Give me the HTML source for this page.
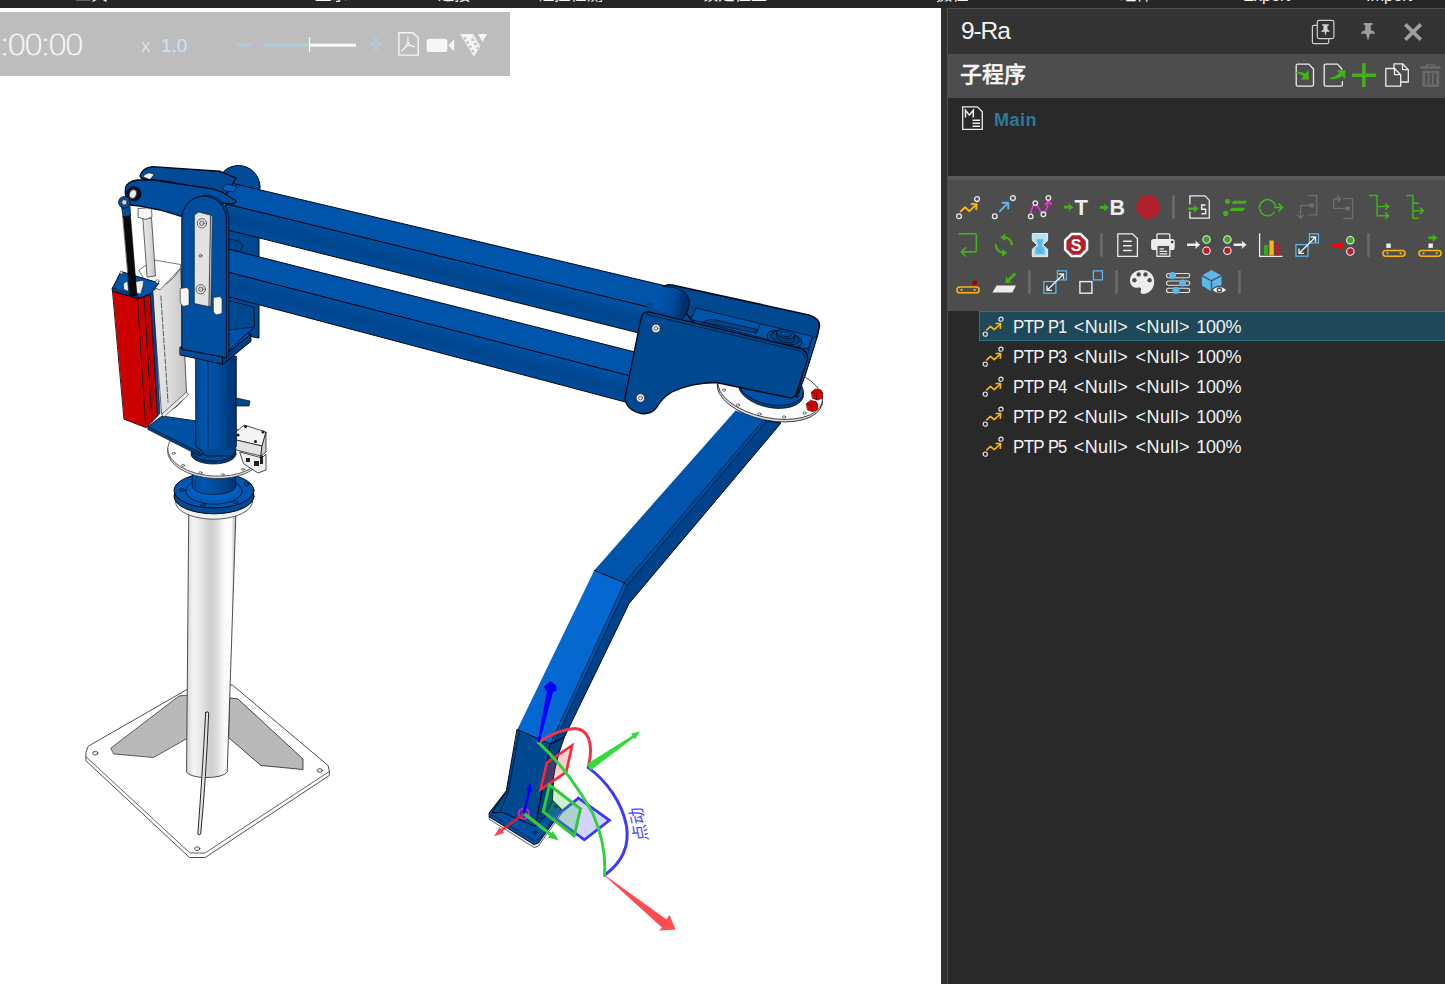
<!DOCTYPE html>
<html lang="zh">
<head>
<meta charset="utf-8">
<title>9-Ra</title>
<style>
*{box-sizing:border-box;margin:0;padding:0}
html,body{width:1445px;height:984px;overflow:hidden;background:#fff}
body{position:relative;font-family:"Liberation Sans","Noto Sans CJK SC",sans-serif;color:#f0f0f0}
#topbar{position:absolute;left:0;top:0;width:1445px;height:8px;background:#262626;overflow:hidden;z-index:5}
#topbar span{position:absolute;top:-18.3px;font-size:16.3px;line-height:24px;color:#f4f4f4;white-space:nowrap}
#view{position:absolute;left:0;top:8px;width:941px;height:976px;background:#fff;overflow:hidden}
#robot{position:absolute;left:0;top:-8px}
#sim{position:absolute;left:0;top:12px;width:510px;height:64px;background:#bdbdbd;z-index:3}
#sim .time{position:absolute;left:0px;top:14px;font-size:33.5px;line-height:38px;color:#f8f8f8;letter-spacing:-1.9px;white-space:nowrap;-webkit-text-stroke:0.8px #bdbdbd}
#sim .spd{position:absolute;left:141px;top:24px;font-size:19px;line-height:20px;color:#cfe2fa;white-space:pre}
#sim .spd b{font-weight:400;position:absolute;left:20px;top:0}
#sim svg{position:absolute;left:0;top:0}
#split{position:absolute;left:941px;top:8px;width:7px;height:976px;background:#2f2f2f}
#panel{position:absolute;left:947px;top:8px;width:498px;height:976px;background:#2a2a2a;border-left:1px solid #4e4e4e;border-top:1px solid #4e4e4e;overflow:hidden}
#ptitle{position:absolute;left:0;top:0;width:497px;height:45px;background:#333333}
#ptitle .t{position:absolute;left:13px;top:7px;font-size:24.5px;line-height:30px;color:#f2f2f2;letter-spacing:-1.1px}
#sub{position:absolute;left:0;top:45px;width:497px;height:44px;background:#4d4d4d}
#sub .t{position:absolute;left:12px;top:6px;font-size:22px;line-height:30px;font-weight:500;color:#f6f6f6;-webkit-text-stroke:0.4px #f6f6f6}
#progs{position:absolute;left:0;top:89px;width:497px;height:78px;background:#292929}
#progs .main{position:absolute;left:46px;top:10px;font-size:18px;line-height:24px;font-weight:700;color:#2c7a9c;letter-spacing:0.5px}
#tb{position:absolute;left:0;top:167px;width:497px;height:135px;background:#4d4d4d;border-top:4px solid #595959}
#list{position:absolute;left:0;top:302px;width:497px;height:674px;background:#292929}
.selbg{position:absolute;left:31px;top:0;width:466px;height:30px;background:#1f4859;border:1px solid #2e6f8c;border-right:none}
.row{position:absolute;left:0;width:497px;height:30px;font-size:18px;line-height:32px;color:#f3f3f3;white-space:pre}
.row span{position:absolute;top:0;transform-origin:0 50%}
.picon{position:absolute;left:0;top:0}
</style>
</head>
<body>
<div id="topbar">
<span style="left:75px">工具</span><span style="left:315px">显示</span><span style="left:438px">连接</span><span style="left:538px">碰撞检测</span><span style="left:702px">锁定位置</span><span style="left:936px">摄位</span><span style="left:1120px">组件</span><span style="left:1243px;top:-16.600px">Export</span><span style="left:1366px;top:-16.600px">Import</span>
</div>

<div id="view">
<svg id="robot" width="941" height="984" viewBox="0 0 941 984">
<defs>
<linearGradient id="gcol" x1="0" x2="1" y1="0" y2="0"><stop offset="0" stop-color="#d6d6d6"/><stop offset=".15" stop-color="#f4f4f4"/><stop offset=".3" stop-color="#e6e6e6"/><stop offset=".48" stop-color="#cecece"/><stop offset=".62" stop-color="#dcdcdc"/><stop offset=".76" stop-color="#fbfbfb"/><stop offset=".9" stop-color="#ffffff"/><stop offset=".95" stop-color="#d2d2d2"/><stop offset="1" stop-color="#b4b4b4"/></linearGradient>
<linearGradient id="gbcol" x1="0" x2="1" y1="0" y2="0"><stop offset="0" stop-color="#004a98"/><stop offset=".25" stop-color="#0056b0"/><stop offset=".5" stop-color="#004e9e"/><stop offset=".8" stop-color="#003e82"/><stop offset="1" stop-color="#003272"/></linearGradient>
<linearGradient id="gcyl" x1="0" x2="1" y1="0" y2="0"><stop offset="0" stop-color="#e8e8e8"/><stop offset=".5" stop-color="#dcdcdc"/><stop offset="1" stop-color="#c4c4c4"/></linearGradient>
<linearGradient id="gside1" gradientUnits="userSpaceOnUse" x1="446" y1="257.7" x2="439.500" y2="283.0"><stop offset="0" stop-color="#0052a6"/><stop offset=".25" stop-color="#004a96"/><stop offset=".6" stop-color="#00458e"/><stop offset=".9" stop-color="#004a98"/><stop offset="1" stop-color="#004c9c"/></linearGradient>
<linearGradient id="gside2" gradientUnits="userSpaceOnUse" x1="446" y1="328.5" x2="439.500" y2="352.6"><stop offset="0" stop-color="#0052a6"/><stop offset=".25" stop-color="#004a96"/><stop offset=".6" stop-color="#00458e"/><stop offset=".9" stop-color="#004a98"/><stop offset="1" stop-color="#004c9c"/></linearGradient>
<linearGradient id="groll" gradientUnits="userSpaceOnUse" x1="660" y1="296" x2="690" y2="303"><stop offset="0" stop-color="#0054aa"/><stop offset=".45" stop-color="#004c9c"/><stop offset=".85" stop-color="#002f66"/><stop offset="1" stop-color="#00285a"/></linearGradient>
</defs>
<g stroke="#000814" stroke-width="1" stroke-linejoin="round" stroke-linecap="round">
<g id="base">
<polygon points="86,752 88.3,746.2 200,682 232.6,685.2 328.1,765.5 329.3,771 329.3,775.5 205.2,857.5 189.5,857.5 86.2,761" fill="#ffffff" stroke="#222" stroke-width="0.8"/>
<polyline points="86.2,757 190,853 205,853 329.3,771.500" fill="none" stroke="#222" stroke-width="0.7"/>
<polygon points="111,748 179,696 188,695 188,738 153.5,757.5 114,754" fill="#b9b9b9" stroke="#222" stroke-width="0.7"/>
<polygon points="230,698 238,699 303,759 303,769.5 261,765.5 229,738" fill="#b9b9b9" stroke-width="0.7"/>
<g fill="#e8e8e8" stroke="#222" stroke-width="0.7"><ellipse cx="95.300" cy="753.200" rx="2.600" ry="1.900"/><ellipse cx="319.800" cy="770.500" rx="2.600" ry="1.900"/><ellipse cx="197.200" cy="848.700" rx="2.600" ry="1.900"/></g>
</g>

<g id="column">
<path d="M189.200,505 L236.200,505 L227.200,772 A20.400,6.500 0 0 1 186.400,770 Z" fill="url(#gcol)" stroke="#222" stroke-width="0.8"/>
<path d="M205.700,712.500 Q207.200,711 208.700,712.500 Q206,780 200.700,834 Q199.200,835.500 197.800,834 Q202,780 205.700,712.500Z" fill="#e4e4e4" stroke="#111" stroke-width="0.9"/>
<!-- blue flange -->
<ellipse cx="214" cy="501.7" rx="38.5" ry="17.5" fill="#f2f2f2" stroke="#222" stroke-width="0.7"/>
<ellipse cx="214" cy="496.3" rx="40" ry="17.5" fill="#004a96"/>
<ellipse cx="214" cy="490.5" rx="40" ry="17.5" fill="#0056b0"/>
<ellipse cx="214" cy="491" rx="28.2" ry="13.2" fill="#0058b4" stroke-width="0.7"/>
<ellipse cx="214" cy="489.5" rx="24" ry="10.5" fill="#0060c4" stroke="none"/>
<path d="M192.2,468 L192.200,486 A21.800,8.500 0 0 0 235.800,486 L235.800,468 Z" fill="url(#gbcol)" stroke-width="0.7"/>
<g fill="#0050a4" stroke-width="0.6"><ellipse cx="182" cy="490" rx="2.300" ry="1.500"/><ellipse cx="246.500" cy="484" rx="2.300" ry="1.500"/><ellipse cx="203" cy="505.500" rx="2.300" ry="1.500"/><ellipse cx="235.500" cy="502.500" rx="2.300" ry="1.500"/></g>
<!-- white disc -->
<ellipse cx="214.800" cy="452.900" rx="47.200" ry="25.600" transform="rotate(3.200 214.800 452)" fill="#e0e0e0" stroke="#222" stroke-width="0.7"/>
<ellipse cx="214.800" cy="450.700" rx="47.200" ry="25.400" transform="rotate(3.200 214.800 452)" fill="#ffffff" stroke="#222" stroke-width="0.7"/>
<g fill="#e8e8e8" stroke="#333" stroke-width="0.6"><ellipse cx="173.700" cy="453.300" rx="1.600" ry="1.100"/><ellipse cx="183" cy="465.400" rx="1.600" ry="1.100"/><ellipse cx="200.400" cy="472.700" rx="1.600" ry="1.100"/><ellipse cx="222.700" cy="474.600" rx="1.600" ry="1.100"/><ellipse cx="243" cy="469.300" rx="1.600" ry="1.100"/></g>
<ellipse cx="213.500" cy="454" rx="22.500" ry="10" fill="#003a7a" stroke-width="0.7"/>
<ellipse cx="213.800" cy="452" rx="22" ry="9" fill="#004a96" stroke-width="0.7"/>
<!-- lower bracket arm -->
<polygon points="148,426.500 162,416 197,421 197,447 206,453 200,455" fill="#0050a4" stroke-width="0.8"/>
<polygon points="148,426.500 200,452.500 200,456 148,429.500" fill="#003f82" stroke-width="0.6"/>
<!-- motor box -->
<polygon points="236,432 244,425 266,432 262,446 236,440" fill="#f4f4f4" stroke-width="0.7"/>
<polygon points="236,440 262,446 261,456 236,450" fill="#e2e2e2" stroke-width="0.7"/>
<polygon points="262,446 266,432 266,452 261,456" fill="#d0d0d0" stroke-width="0.7"/>
<polygon points="240,452 262,458 266,454 266,470 258,473 244,464" fill="#f0f0f0" stroke-width="0.7"/>
<g fill="#222" stroke="none"><circle cx="245.500" cy="426.500" r="1.6"/><circle cx="263" cy="432" r="1.6"/><circle cx="238" cy="435" r="1.6"/><circle cx="255.500" cy="441.500" r="1.6"/><rect x="246" y="458" width="4" height="4"/><rect x="254" y="461" width="5" height="5"/><rect x="260" y="456" width="3" height="8"/></g>
<!-- blue column -->
<path d="M195.800,356 L236.300,356 L236.300,446 A20.250,6 0 0 1 195.800,446 Z" fill="url(#gbcol)" stroke-width="0.8"/>
<line x1="208" y1="362" x2="208" y2="450" stroke-width="0.5"/>
<path d="M200,450 L206,456 L232,456 L236.300,449" fill="#004890" stroke-width="0.7"/>
<polygon points="236.300,335 250,333 250,340 245,344 236.300,344" fill="#004890" stroke-width="0.7"/>
<polygon points="236.300,398 250,401 249,406 236.300,406" fill="#004890" stroke-width="0.7"/>
</g>

<g id="lowerarm">
<!-- side faces -->
<polygon points="764,420.1 781,423 629.2,603.3 564.3,737.3 550.5,744 624.6,582.9" fill="#00418a"/>
<!-- upper segment -->
<polygon points="735.6,410.4 764,420.1 624.6,582.9 594.2,570.4" fill="#0054ac" stroke="none"/>
<polygon points="764,420.1 766.5,421 627,585.6 624.6,582.9" fill="#004a98" stroke-width="0.5"/>
<!-- lower segment -->
<polygon points="594.2,570.4 624.6,582.9 550.5,744 517.3,729.5" fill="#0468d0" stroke="none"/>

<polygon points="624.6,582.9 627,585.6 553,745 550.5,744" fill="#0052a8" stroke-width="0.5"/>
<path d="M594.2,570.4 L624.6,582.9" fill="none"/>
<!-- foot plate -->
<path d="M489.5,819.5 L534,847.5 L538.5,846 L561.5,813.5 L561.5,810 L489.5,816 Z" fill="#e8e8e8" stroke-width="0.6"/>
<path d="M489.4,812.6 L507,790 L552.4,800 L561.1,808.8 L561.5,811 L538.5,843 L534,844.5 L489.5,817 Z" fill="#0050a2"/>
<polyline points="489.4,813.6 534.5,840.5 538.5,839.5 561.1,809.5" fill="none" stroke-width="0.6"/>
<g fill="#003a78" stroke-width="0.5"><ellipse cx="496" cy="812" rx="1.8" ry="1.4"/><ellipse cx="535.5" cy="832.5" rx="1.8" ry="1.4"/><ellipse cx="556" cy="806.5" rx="1.8" ry="1.4"/></g>
<!-- foot block -->
<path d="M517.3,729.5 L550.5,744 L541.7,793 L535.5,826.5 L503,812.6 L492,812.5 L505.9,792.3 Z" fill="#004890"/>
<path d="M550.5,744 L564.3,737.3 Q556,760 553.6,777 L552.4,801 L544,817.5 L535.5,826.5 L541.7,793 Z" fill="#003f80"/>
<polyline points="519.5,731.5 507.8,793.5 500,811.5" fill="none" stroke-width="0.6"/>
</g>

<g id="beams">
<!-- back plate of left clevis -->
<path d="M226,190 L226,332 L259,338 L259,200 Z" fill="#004890"/>
<circle cx="238.5" cy="187" r="21.5" fill="#004c9a"/>
<path d="M229,240 q10,-2 14,6 q-3,9 -14,6z" fill="#004488" stroke-width="0.6"/>
<!-- lower beam -->
<polygon points="226,248.5 640,353.3 634,377.0 226,271.7" fill="#0054aa"/>
<polygon points="226,271.7 634,377.0 628,402.7 226,296.0" fill="url(#gside2)"/>
<!-- upper beam -->
<polygon points="226,181.8 666,286.0 692,293 684,318 656,309.0 226,204.0" fill="#0054aa"/>
<polygon points="226,204.0 656,309.0 642,333.8 226,229.6" fill="url(#gside1)"/>
</g>

<g id="leftasm">
<!-- white pneumatic cylinder -->
<path d="M152.600,290 Q170,286 180.600,268 L186.500,392 Q182,408 162,414 Z" fill="url(#gcyl)" stroke="#222" stroke-width="0.7"/>
<path d="M160.900,296 L168,402" fill="none" stroke="#222" stroke-width="0.7" stroke-dasharray="5 2"/>
<polygon points="139,270 154,260 180.600,264.500 180.600,268 160,290 148,285" fill="#fdfdfd" stroke="#222" stroke-width="0.6"/>
<path d="M162,414 L186.500,392 l2,3 L164,417z" fill="#eee" stroke="#222" stroke-width="0.6"/>
<!-- white rod and nut -->
<polygon points="143.200,218 151.500,218 155.500,276 147.500,277" fill="url(#gcyl)" stroke="#222" stroke-width="0.7"/>
<polygon points="138.500,208.500 151.500,207.500 152,217 146,219.500 138.500,217.500" fill="#f6f6f6" stroke="#222" stroke-width="0.7"/>
<!-- red box -->
<polygon points="150.2,294.4 153,292.5 160,413.500 157.5,416" fill="#004a96" stroke-width="0.6"/>
<polygon points="112.8,291 137.7,298.6 146,427.6 124.3,419.3" fill="#cc0000" stroke="#200" stroke-width="0.9"/>
<polygon points="137.7,298.6 144.3,296.5 152.3,421.3 146,427.6" fill="#c60000" stroke="#200" stroke-width="0.9"/>
<polygon points="144.3,296.5 150.2,294.4 157.5,416 152.3,421.3" fill="#bc0000" stroke="#200" stroke-width="0.9"/>
<!-- blue cap -->
<polygon points="112.5,288 121,271.5 159,283 151,293.500 138.500,298.600 112.800,291" fill="#0054aa"/>
<polygon points="112.500,288 138.500,296 138.500,298.600 112.800,291" fill="#004488" stroke-width="0.5"/>
<polygon points="123.500,283.500 127.500,281 128.500,291 124,289.500" fill="#f0f0f0" stroke="#222" stroke-width="0.5"/>
<polygon points="135.500,281.500 143.500,280.500 143,286 140.500,294 136.500,293" fill="#f0f0f0" stroke="#222" stroke-width="0.5"/>
<circle cx="157.300" cy="281.500" r="1.800" fill="#f0f0f0" stroke="#222" stroke-width="0.5"/><circle cx="121.500" cy="272.500" r="1.500" fill="#f0f0f0" stroke="#222" stroke-width="0.5"/>
<!-- black rod -->
<polygon points="123,216 130.500,215.500 137,296 130,296" fill="#0a0a0a" stroke="#000" stroke-width="0.5"/>
<!-- back link -->
<path d="M140,176 Q142,168 152,166.600 L220,171.300 L236,178 L226,195 L170,182 L141.500,178.500 Z" fill="#004a96" stroke-width="1.400"/>
<path d="M143,176.500 q5,-6 11,-2 l-4,5z" fill="#f4f4f4" stroke="#222" stroke-width="0.6"/>
<!-- beam end cap -->
<path d="M222.500,187 Q224,184 229,184.500 L237,186.500 L234,192 L224,190.500Z" fill="#0060c0" stroke-width="0.6"/>
<!-- front link -->
<path d="M125.500,188 Q127,181.500 137.500,180 L152.500,180 L212.500,188.800 L222,192 L236.300,201 Q235,204 231,204 L222,203 L181.300,216.300 L160,210 L141.300,206.300 L130.600,205 Q124,198 125.500,188 Z" fill="#004e9e" stroke-width="1.300"/>
<circle cx="133.800" cy="193.800" r="7.300" fill="#0a1020" stroke-width="0.6"/>
<ellipse cx="133" cy="194" rx="3.500" ry="4.500" fill="#e8e8e8" stroke="#222" stroke-width="0.6" transform="rotate(20 133 194)"/>
<!-- rod eye -->
<path d="M121.500,207 L123,216.500 L130.500,216 L130,206Z" fill="#004e9e" stroke-width="0.7"/>
<circle cx="124.400" cy="202.300" r="5.800" fill="#004e9e" stroke-width="0.8"/>
<circle cx="124.400" cy="202.300" r="2.600" fill="#d8d8d8" stroke="#222" stroke-width="0.6"/>
<!-- platform -->
<polygon points="180.300,347.600 222.900,357 250.900,334.200 226,326" fill="#0056b0"/>
<polygon points="180.300,347.600 222.900,357 222.900,364.300 180.300,355" fill="#004c9c"/>
<polygon points="222.900,357 250.900,334.200 250.900,341.400 222.900,364.300" fill="#003f82"/>
<!-- inner right of bracket -->
<polygon points="226.500,300 254,307 254.500,327 229,350 226.500,350" fill="#004890" stroke-width="0.7"/>
<polygon points="229,330 254.500,327 229,350" fill="#0052a8" stroke-width="0.6"/>
<!-- front bracket plate -->
<path d="M181.800,349 L181.800,219 A22.300,23 0 0 1 226.400,219 L226.400,358.500 L222.900,357 Z" fill="#004e9e"/>
<path d="M204.100,196 A22.300,23 0 0 1 226.400,219 L226.400,358 L229,355.500 L229,219 A24,24.200 0 0 0 204.100,194.900 Z" fill="#003f82" stroke-width="0.6"/>
<!-- small white brackets -->
<g fill="#f4f4f4" stroke="#222" stroke-width="0.6"><polygon points="180.500,288.500 187,287.500 189,290 189,305 183,306.500 180.500,303"/><polygon points="213.500,297.500 220,296.500 222,299 222,313.500 216,315 213.500,312"/></g>
<!-- white strip -->
<polygon points="194.500,215 198.500,212 210.800,215.200 209.200,306.700 194.500,303.600" fill="#e2e2e2" stroke="#222" stroke-width="0.7"/>
<polygon points="210.800,215.200 212.300,216.500 210.800,305.500 209.200,306.700" fill="#c8c8c8" stroke="#222" stroke-width="0.5"/>
<g fill="#eee" stroke="#222" stroke-width="0.7"><circle cx="201.900" cy="223.300" r="4.600"/><circle cx="200.700" cy="289.300" r="4.600"/></g>
<g fill="#ccc" stroke="#222" stroke-width="0.6"><circle cx="201.900" cy="223.300" r="2.300"/><circle cx="200.700" cy="289.300" r="2.300"/><circle cx="200.600" cy="255.800" r="1.400"/></g>
</g>

<g id="endbracket">
<!-- flange disc under bracket -->
<ellipse cx="769.9" cy="393.6" rx="53.4" ry="26.8" transform="rotate(11.8 769.9 393)" fill="#dedede" stroke-width="0.7"/>
<ellipse cx="769.9" cy="391.4" rx="53.2" ry="26.4" transform="rotate(11.8 769.9 393)" fill="#fcfcfc" stroke-width="0.7"/>
<g fill="#fff" stroke-width="0.6" stroke="#222"><ellipse cx="724" cy="390" rx="1.6" ry="1.2"/><ellipse cx="738" cy="405" rx="1.6" ry="1.2"/><ellipse cx="759.5" cy="414" rx="1.6" ry="1.2"/><ellipse cx="784" cy="417" rx="1.6" ry="1.2"/><ellipse cx="804.5" cy="413" rx="1.6" ry="1.2"/></g>
<ellipse cx="771" cy="390" rx="33" ry="17.5" transform="rotate(11.8 771 390)" fill="#003f82" stroke-width="0.7"/>
<ellipse cx="771" cy="387" rx="33" ry="17.5" transform="rotate(11.8 771 387)" fill="#0052a8" stroke-width="0.7"/>
<!-- red nuts -->
<g fill="#e00000" stroke="#400" stroke-width="0.7"><path d="M811.5,392 l4,-3 l5.500,1 l1.800,3 l-0.500,5 l-4.500,2 l-5,-1.500z"/><path d="M806.5,403.500 l4,-3 l5.500,1 l1.800,3 l-0.500,5 l-4.500,2 l-5,-1.500z"/><path d="M812,392.500 l4.500,1.500 l5,-1.500 M816.500,394 v5.500 M807,404 l4.500,1.500 l5,-1.500 M811.500,405.500 v5.500" fill="none"/></g>
<polygon points="648,302 694,313 692,332 640,334" fill="#004890" stroke="none"/>
<!-- back plate + inner -->
<path d="M664,286.500 Q667,284 672,285 L808.800,315 Q820,318.500 819.400,326 L817.500,335 L805,375 L797,397 L790,380 L700,330 Z" fill="#004890" stroke-width="1.600"/>
<path d="M696.300,308.100 L812.500,336.300 L808,349 L797,347 L691.300,319.500 Z" fill="#0054aa" stroke-width="0.7"/>
<path d="M760,324.400 L756.300,333.800" fill="none" stroke-width="0.7"/>
<path d="M703.500,322 Q708,318.500 716,320 L757,329.500 L756,332.500 Z" fill="#004488" stroke-width="0.7"/>
<path d="M664.500,286.700 Q686,287 689.500,300 Q690,312 682,319 L652,309 Z" fill="url(#groll)" stroke="none"/><path d="M664.500,286.700 Q686,287 689.500,300 Q690,312 682,319" fill="none" stroke-width="0.8"/>
<!-- pin -->
<ellipse cx="784.500" cy="339" rx="18" ry="8" transform="rotate(13 784.500 339)" fill="#004a96" stroke-width="0.7"/>
<ellipse cx="785" cy="338" rx="14.500" ry="6.300" transform="rotate(13 785 338)" fill="#004488" stroke-width="0.7"/>
<path d="M776.800,332 v4.500 a9,4.200 13 0 0 17.600,4 v-4.500" fill="#003a7a" stroke-width="0.7"/>
<ellipse cx="785.600" cy="334" rx="9" ry="4.200" transform="rotate(13 785.600 334)" fill="#0052a8" stroke-width="0.7"/>
<ellipse cx="785.600" cy="334" rx="6" ry="2.600" transform="rotate(13 785.600 334)" fill="#004a98" stroke-width="0.6"/>
<!-- right inner face -->
<path d="M807,358 L811.500,340 L817.500,335 L805,375 L797,397 Z" fill="#0052a8" stroke-width="0.7"/>
<!-- front plate -->
<path d="M648.800,311.900 L799.300,348.200 Q808.500,351 807.600,359 L796.500,393 Q794.500,399.500 788,397.500 L716.300,382.500 Q690,383 672,392 Q662,398 657,407 Q651,415 641,413.500 Q626,410 625,398 L640.500,320.500 Q642.500,311 648.800,311.900 Z" fill="#004890" stroke-width="1.300"/>
<path d="M647,314.500 L798.500,350.700 Q805,352.500 805.500,358" fill="none" stroke-width="0.6"/>
<g fill="#f4f4f4" stroke="#222" stroke-width="0.7"><circle cx="656" cy="328.500" r="4.300"/><circle cx="640.500" cy="398" r="4.300"/></g>
<g fill="#ddd" stroke="#222" stroke-width="0.6"><circle cx="656" cy="328.500" r="2"/><circle cx="640.500" cy="398" r="2"/></g>
</g>

<g id="gizmo" stroke="none" fill="none">
<!-- planes -->
<polygon points="546.9,762.5 572.1,745.5 566.2,772.2 540.6,789.6" fill="rgba(255,60,60,0.25)" stroke="#ee2c3c" stroke-width="2.6" stroke-linejoin="miter"/>
<polygon points="578.5,798.1 609.5,820.4 584.3,839.8 554.3,817.5" fill="rgba(60,60,255,0.22)" stroke="#3a3af4" stroke-width="2.8" stroke-linejoin="miter"/>
<polygon points="549.5,785 580.5,808.8 574.2,835.9 543.2,811.7" fill="rgba(60,200,60,0.25)" stroke="#2fc83a" stroke-width="3" stroke-linejoin="miter"/>
<!-- arcs -->
<path d="M538.3,742.3 C548,736 560,729.500 574.6,728.500 C588,729 594,742 588.4,767" stroke="#f03446" stroke-width="3"/>
<path d="M588.2,767.6 C607,781 622,803 626.500,826 C630,848 620,864 604.5,875.2" stroke="#3c3cf6" stroke-width="3"/>
<path d="M538.3,742.3 C560,762 580,790 592.7,813.3 C601,832 606,854 604.5,875.2" stroke="#35d040" stroke-width="3"/>
<!-- big arrows -->
<polygon points="537.4,742 539.6,742.5 553,692 556.5,691 556.3,685.5 550.7,681 544,686.5 545.5,690.5 547,691" fill="#0000ff"/>
<polygon points="587,764 590.5,770.5 634,737.5 635,739.500 640,731.500 631,733.500 632.500,735.500" fill="#32dc3c"/>
<polygon points="604,874.5 605,876 662,927.500 659,930.500 675.5,929.500 669.500,915 666.500,919.500" fill="#ff4a50"/>
<!-- small gizmo -->
<circle cx="523.8" cy="813.6" r="5.2" stroke="#d020d8" stroke-width="2"/>
<polygon points="522.700,813 525,813.500 530.500,791 532.500,791.500 530.5,783.3 526,789.800 528,790.400" fill="#0000ff"/>
<polygon points="523,812.500 524.800,815 503,831 504.200,833 494,836.200 499.800,827 501,829" fill="rgba(240,30,40,0.8)"/>
<polygon points="523.500,815.200 525.500,812.500 551.500,833 552.800,831 558.800,840.400 548,837.500 549.500,835.500" fill="#2fd03a"/>
<text transform="translate(648,840.500) rotate(-101) skewX(-6)" font-family="'Liberation Sans','Noto Sans CJK SC',sans-serif" font-size="17.200" font-weight="400" fill="#4a4aff" stroke="none">点动</text>
</g>

</g>
</svg>

</div>

<div id="sim">
<div class="time">:00:00</div>
<div class="spd">x<b>1.0</b></div>
<svg width="510" height="64" viewBox="0 12 510 64">
<rect x="236.500" y="43.300" width="15" height="3.800" rx="1.500" fill="#b2cad6"/>
<rect x="262.600" y="43.700" width="47" height="3" fill="#b2cad6"/><rect x="309.300" y="43.700" width="46.700" height="3" fill="#fafafa"/><rect x="308.900" y="37" width="1.200" height="15.200" fill="#fafafa"/>
<path d="M369,44.200 L383,44.200 M376,37.200 L376,51.200" stroke="#b2cad6" stroke-width="3.400" fill="none"/>
<g fill="none" stroke="#f6f6f6" stroke-width="1.400"><path d="M398.900,32.800 L412.600,32.800 L418.200,37.600 L418.200,55.100 L398.900,55.100Z"/>
<path d="M407.900,37 L407.900,42.500 M406.600,46 L401.800,50.800 M409.800,45.500 L414.600,46.600 M407.900,42 L405.800,46.500 L410.300,45.300Z" stroke-width="1.100" stroke-linecap="round"/></g>
<rect x="426.600" y="38.700" width="20.700" height="13.300" rx="2.600" fill="#f6f6f6"/><polygon points="448.400,45.300 454.200,39.300 454.200,51.800" fill="#f6f6f6"/>
<g><polygon points="460,34 473.200,34 480.300,46.500 473.800,56.800" fill="#f4f4f4"/>
<g fill="#bcbcbc"><rect x="463.800" y="37.200" width="2.300" height="2.300"/><rect x="466.600" y="41.400" width="2.300" height="2.300"/><rect x="469.200" y="45.600" width="2.300" height="2.300"/><rect x="471.600" y="49.800" width="2.300" height="2.300"/>
<rect x="471.400" y="38.700" width="2.300" height="2.300"/><rect x="474.100" y="42.900" width="2.300" height="2.300"/><rect x="476.400" y="47.100" width="2.100" height="2.100"/></g>
<path d="M461.600,35 L474,55.600 M472.200,35 L479,46.800" stroke="#d4d4d4" stroke-width="0.600" fill="none"/>
<polygon points="477.900,34 487,34 482.500,42" fill="#f6f6f6"/></g>
</svg>

</div>

<div id="split"></div>
<div id="panel">
 <div id="ptitle"><div class="t">9-Ra</div><svg style="position:absolute;left:0;top:0" width="497" height="45" viewBox="948 9 497 45">
<g fill="none" stroke="#cfcfcf" stroke-width="1.200"><path d="M1317.300,25.300 L1314,25.300 Q1312.400,25.300 1312.400,27 L1312.400,42 Q1312.400,43.700 1314,43.700 L1327,43.700 Q1328.700,43.700 1328.700,42 L1328.700,38.600"/>
<rect x="1317.300" y="20.400" width="16.600" height="18.200" rx="1.800"/></g>
<path d="M1322.200,24.200 h6.600 v1.600 h-1.300 v3.600 q2.200,0.600 2.400,2.400 h-3.500 l-0.900,4.500 l-0.900,-4.500 h-3.500 q0.200,-1.800 2.400,-2.400 v-3.600 h-1.300z" fill="#d4d4d4"/>
<path d="M1363.800,23.100 h8.700 v2 h-1.700 v5.200 q3.800,0.800 4.100,3.400 h-4.900 l-2,7.400 l-2,-7.400 h-4.900 q0.300,-2.600 4.100,-3.400 v-5.200 h-1.700z" fill="#9e9e9e"/>
<path d="M1405.300,24.400 L1420.800,39.800 M1420.800,24.400 L1405.300,39.800" stroke="#9e9e9e" stroke-width="3.700" fill="none"/>
</svg>
</div>
 <div id="sub"><div class="t">子程序</div><svg style="position:absolute;left:0;top:0" width="497" height="44" viewBox="948 54 497 44">
<g fill="none" stroke="#ededed" stroke-width="1.300" stroke-linejoin="round">
<path d="M1296.200,65.500 Q1296.200,64.100 1297.600,64.100 L1308.800,64.100 L1313.500,69 L1313.500,84.700 Q1313.500,86.100 1312.100,86.100 L1297.600,86.100 Q1296.200,86.100 1296.200,84.700Z"/>
<path d="M1342.300,69.500 L1337.600,64.100 L1325.600,64.100 Q1324.200,64.100 1324.200,65.500 L1324.200,84.700 Q1324.200,86.100 1325.600,86.100 L1341,86.100 Q1342.400,86.100 1342.400,84.700 L1342.400,81"/>
</g>
<path d="M1293.500,72.800 Q1300,70.500 1305,73.500 L1308.500,70.500 L1309,79.700 L1300.500,79.400 L1303.500,76.300 Q1299,73 1293.500,72.800Z" fill="#42b11a"/>
<path d="M1328.400,78.200 Q1335,77.500 1339.500,72.800 L1336.500,70.300 L1345.300,70.300 L1345.300,79.300 L1342.300,76 Q1336,81 1328.400,78.200Z" fill="#42b11a"/>
<path d="M1352,75.200 L1376,75.200 M1363.900,63.200 L1363.900,87.100" stroke="#42b11a" stroke-width="3.400" fill="none"/>
<g fill="#4d4d4d" stroke="#ededed" stroke-width="1.300" stroke-linejoin="round">
<path d="M1394,63.800 L1402.500,63.800 L1408.300,69.600 L1408.300,82 L1394,82Z"/><path d="M1402.500,63.800 L1402.500,69.600 L1408.300,69.600" fill="none"/>
<path d="M1385.800,68.500 L1394.500,68.500 L1400.700,74.700 L1400.700,86.200 L1385.800,86.200Z"/><path d="M1394.500,68.500 L1394.500,74.700 L1400.700,74.700" fill="none"/>
</g>
<g fill="#686868"><rect x="1420.300" y="66" width="20.600" height="2.800" rx="1"/><path d="M1425.600,66 q0,-2.200 2.200,-2.200 h5.500 q2.200,0 2.200,2.200 h-1.500 q0,-0.900 -0.900,-0.900 h-5.100 q-0.900,0 -0.900,0.900z"/>
<path d="M1422.300,70.700 h16.900 v15 q0,1.400 -1.400,1.400 h-14.100 q-1.400,0 -1.400,-1.400z M1425.300,73 v11.500 h2.300 v-11.500z M1429.600,73 v11.500 h2.300 v-11.500z M1433.900,73 v11.500 h2.300 v-11.500z" fill-rule="evenodd"/></g>
</svg>
</div>
 <div id="progs"><svg style="position:absolute;left:0;top:0" width="60" height="40" viewBox="948 98 60 40">
<g fill="none" stroke="#ededed" stroke-width="1.300"><path d="M962.700,106.800 L977.400,106.800 L982.300,111.700 L982.300,129.400 L962.700,129.400Z"/>
<path d="M965.500,117.600 L965.500,110.300 L969.400,115 L973.300,110.300 L973.300,117.600" stroke-width="1.500"/>
<path d="M972.500,120.200 L980.100,120.200 M972.500,123.200 L980.100,123.200 M972.500,126.200 L980.100,126.200" stroke-width="1.400"/></g>
</svg>
<div class="main">Main</div></div>
 <div id="tb"><svg style="position:absolute;left:0;top:0" width="497" height="131" viewBox="948 180 497 131">
<g transform="translate(956,195) scale(1.0)" fill="none" stroke-linecap="round" stroke-linejoin="round">
<circle cx="3" cy="21.2" r="2.4" stroke="#ededed" stroke-width="1.3"/><circle cx="21" cy="4.1" r="2.4" stroke="#ededed" stroke-width="1.3"/>
<path d="M4.8,16.4 L9,12.3 L13.3,16.1 L20,9.9 M15.6,9 L20.6,9.2 L20.3,14.4" stroke="#fdb515" stroke-width="1.9"/></g>
<g transform="translate(992,195)" fill="none" stroke-linecap="round" stroke-linejoin="round">
<circle cx="2.8" cy="21.2" r="2.4" stroke="#ededed" stroke-width="1.3"/><circle cx="20.9" cy="3.1" r="2.4" stroke="#ededed" stroke-width="1.3"/>
<path d="M7.8,16.4 L15.9,8.2 M10.6,7.8 L16.3,7.8 L16.3,13.6" stroke="#5bb8ec" stroke-width="1.9"/></g>
<g transform="translate(1028,195)" fill="none" stroke-linecap="round" stroke-linejoin="round">
<path d="M2.9,18.4 C3.8,13 5,10.5 6.300,9.800 M8.800,10 C11,13 12.500,16.500 14.200,17.700 M17,17.600 C19,14 20,10 20.300,6.300 M17.300,9.600 L20.400,5.800 L23.200,9.300" stroke="#ff2ce6" stroke-width="1.6"/>
<g stroke="#ededed" stroke-width="1.3"><circle cx="2.7" cy="21.4" r="2.3"/><circle cx="7.3" cy="8.100" r="2.3"/><circle cx="15.4" cy="19.300" r="2.3"/><circle cx="20.4" cy="2.900" r="2.300"/></g></g>
<g transform="translate(1064,195)"><path d="M0,10.85 L5.1000000000000005,10.85 L4.300000000000001,7.999999999999999 L9.3,12.2 L4.300000000000001,16.4 L5.1000000000000005,13.549999999999999 L0,13.549999999999999Z" fill="#42b11a" stroke="none"/><text x="10.500" y="19.900" font-family="'Liberation Sans',sans-serif" font-weight="700" font-size="22" fill="#ededed">T</text></g>
<g transform="translate(1100,195)"><path d="M-0.2,11.05 L4.6000000000000005,11.05 L3.8000000000000007,8.2 L8.8,12.4 L3.8000000000000007,16.6 L4.6000000000000005,13.75 L-0.2,13.75Z" fill="#42b11a" stroke="none"/><text x="9.600" y="19.900" font-family="'Liberation Sans',sans-serif" font-weight="700" font-size="21.5" fill="#ededed">B</text></g>
<circle cx="1148.1" cy="207.100" r="11.8" fill="#b0212b"/>
<rect x="1172.2" y="195.3" width="2.6" height="23.5" fill="#6c6c6c"/>
<g transform="translate(1187,195)" fill="none" stroke="#ededed" stroke-width="1.3">
<path d="M2.900,9.500 L2.900,0.900 L18,0.900 L22.300,5.400 L22.300,23.200 L2.900,23.200 L2.900,16.500"/>
<path d="M18.600,9.900 L14.700,9.900 L14.700,14.300 L18.600,14.300 L18.600,18.700 L14.400,18.700" stroke-width="1.5"/>
<path d="M1.2,12.399999999999999 L7.3999999999999995,12.399999999999999 L6.6,9.5 L11.6,13.7 L6.6,17.9 L7.3999999999999995,15.0 L1.2,15.0Z" fill="#42b11a" stroke="none"/></g>
<g transform="translate(1223,195)" fill="#42b11a"><circle cx="4.400" cy="6.600" r="2.500"/><circle cx="2.700" cy="18.400" r="2.600"/>
<polygon points="10.600,5.700 24.200,5.700 22,8.800 8.400,8.800"/><polygon points="8.600,12.800 22.200,12.800 20.200,15.900 6.400,15.900"/></g>
<g transform="translate(1259,195)" fill="none" stroke="#42b11a" stroke-width="1.600" stroke-linecap="round" stroke-linejoin="round">
<path d="M16.300,10.200 A8.100,8.100 0 1 0 15.200,17.400"/><path d="M15.500,12.400 L23.300,12.400 M19.900,8.900 L23.600,12.400 L19.900,15.900"/></g>
<g transform="translate(1295,195)" fill="none" stroke="#6e6e6e" stroke-width="1.300">
<path d="M12.700,0.600 L21.600,0.600 L21.600,19.900 L12.700,19.900"/><rect x="14.400" y="8.300" width="4.400" height="4.200" fill="#6e6e6e" stroke="none"/>
<path d="M14.400,10.300 L5.500,10.300 L5.500,23 M2.400,20 L5.500,23.300 L8.600,20"/></g>
<g transform="translate(1331,195)" fill="none" stroke="#6e6e6e" stroke-width="1.300">
<path d="M12.100,3.600 L21.600,3.600 L21.600,23.500 L12.100,23.500"/><rect x="14.400" y="11.400" width="4.400" height="4.200" fill="#6e6e6e" stroke="none"/>
<path d="M14.400,13.400 L2.600,13.400 L2.600,4 L9.200,4 M6.100,0.700 L9.600,4 L6.100,7.300"/></g>
<g transform="translate(1367,195)" fill="none" stroke="#42b11a" stroke-width="1.500" stroke-linejoin="miter">
<path d="M2.200,0.600 L10.100,0.600 L10.100,20.700 L21.300,20.700 M10.100,11.600 L21.300,11.600 M18.200,8.500 L21.600,11.600 L18.200,14.700 M18.200,17.600 L21.600,20.700 L18.200,23.800"/></g>
<g transform="translate(1403,195)" fill="none" stroke="#42b11a" stroke-width="1.500">
<path d="M3.300,0.600 L9.900,0.600 L9.900,23.200 L16,23.200 M9.900,8.300 L16,8.300 M9.900,15.800 L20.200,15.800 M17,12.600 L20.500,15.800 L17,19"/></g>
<g transform="translate(956,233)" fill="none" stroke="#42b11a" stroke-width="1.600" stroke-linejoin="round" stroke-linecap="round">
<path d="M3,0.800 L18.800,0.800 Q20.400,0.800 20.400,2.400 L20.400,17.300 Q20.400,18.900 18.800,18.900 L5.700,18.900 M9.600,14.900 L5.300,18.900 L9.600,23"/></g>
<g transform="translate(992,233)" fill="none" stroke="#42b11a" stroke-width="2.100" stroke-linecap="butt" stroke-linejoin="round">
<path d="M19.900,12.300 A8.100,8.100 0 0 0 10.500,4.200"/><path d="M3.800,11.300 A8.100,8.100 0 0 0 13.200,19.600"/>
<path d="M13.200,0.600 L8.200,4.500 L13.800,8Z M10.300,16 L15.300,19.700 L9.900,23.700Z" fill="#42b11a" stroke="none"/></g>
<g transform="translate(1028,233)"><path d="M4.300,0.500 L19.600,0.500 L19.600,7.600 L14.600,11.900 L19.600,16.200 L19.600,23.600 L4.300,23.600 L4.300,16.200 L9.300,11.900 L4.300,7.600Z" fill="#b9dff2" stroke="#ededed" stroke-width="1"/>
<path d="M8.400,6.200 L15.500,6.200 L14.200,11.200 L13.800,13.600 L16.200,14 L16.800,21.300 L7.100,21.300 L7.700,14 L10.100,13.600 L9.700,11.200Z" fill="#5bb8ec"/></g>
<g transform="translate(1064,233)"><polygon points="7.100,-0.200 17.100,-0.200 24.300,7 24.300,17 17.100,24.200 7.100,24.200 -0.100,17 -0.100,7" fill="#fff"/>
<polygon points="8.100,2.300 16.100,2.300 21.800,8 21.800,16 16.100,21.700 8.100,21.700 2.400,16 2.400,8" fill="#b0212b"/>
<text x="12.100" y="17.700" text-anchor="middle" font-family="'Liberation Sans',sans-serif" font-weight="700" font-size="16" fill="#fff">S</text></g>
<rect x="1100.2" y="233.3" width="2.6" height="23.5" fill="#6c6c6c"/>
<g transform="translate(1115,233)" fill="none" stroke="#ededed" stroke-width="1.300"><path d="M2.800,0.800 L17.400,0.800 L22.400,5.600 L22.400,23.300 L2.800,23.300Z"/>
<path d="M8.100,8.200 L16.800,8.200 M8.100,12.800 L16.800,12.800 M8.100,17.500 L16.800,17.500" stroke-width="1.500"/></g>
<g transform="translate(1151,233)"><rect x="5.900" y="0.900" width="12.900" height="7" rx="1" fill="none" stroke="#ededed" stroke-width="1.300"/>
<rect x="0.100" y="6" width="23.600" height="11" rx="2.600" fill="#ededed"/><rect x="5.900" y="12.300" width="12.900" height="11" fill="#4d4d4d" stroke="#ededed" stroke-width="1.300"/>
<path d="M8.500,15.800 L13,15.800 M8.500,18.300 L16.200,18.300 M8.500,20.800 L16.200,20.800" stroke="#ededed" stroke-width="1.200"/><circle cx="21.200" cy="9" r="1.300" fill="#333"/></g>
<g transform="translate(1187,233)"><path d="M0,10.600000000000001 L8.899999999999999,10.600000000000001 L8.099999999999998,7.500000000000001 L13.2,11.8 L8.099999999999998,16.1 L8.899999999999999,13.0 L0,13.0Z" fill="#ededed" stroke="none"/><circle cx="19.5" cy="6.500" r="3.700" fill="#38a81c" stroke="#ededed" stroke-width="1.100"/><circle cx="19.5" cy="17.700" r="3.700" fill="#b3202a" stroke="#ededed" stroke-width="1.100"/></g>
<g transform="translate(1223,233)"><circle cx="4.4" cy="6.500" r="3.700" fill="#38a81c" stroke="#ededed" stroke-width="1.100"/><circle cx="4.4" cy="17.700" r="3.700" fill="#b3202a" stroke="#ededed" stroke-width="1.100"/><path d="M10.6,10.600000000000001 L19.3,10.600000000000001 L18.5,7.500000000000001 L23.6,11.8 L18.5,16.1 L19.3,13.0 L10.6,13.0Z" fill="#ededed" stroke="none"/></g>
<g transform="translate(1259,233)"><path d="M0.600,0.200 L0.600,23.400 L23.500,23.400" fill="none" stroke="#ededed" stroke-width="1.300"/>
<rect x="4.800" y="11.800" width="4.300" height="10.600" fill="#38a81c"/><rect x="10.400" y="7.500" width="4.300" height="14.900" fill="#fdb515"/><rect x="16" y="10.200" width="4.700" height="12.200" fill="#b0212b"/></g>
<g transform="translate(1295,233)"><rect x="0.900" y="11.600" width="12" height="11.600" fill="#444" stroke="#5bb8ec" stroke-width="1.300"/><rect x="14.400" y="0.900" width="9" height="9" fill="#444" stroke="#5bb8ec" stroke-width="1.300"/>
<path d="M4.200,20.200 L20.300,4.200 M4,15.500 L4,20.400 L9,20.400 M15.600,4 L20.500,4 L20.500,8.900" fill="none" stroke="#ededed" stroke-width="1.400"/></g>
<g transform="translate(1331,233)"><path d="M0,11.2 L9.0,11.2 L8.2,8.2 L13.5,12.7 L8.2,17.2 L9.0,14.2 L0,14.2Z" fill="#ff0000" stroke="none"/><circle cx="19.300" cy="7.200" r="3.700" fill="#38a81c" stroke="#ededed" stroke-width="1.100"/><circle cx="19.300" cy="18.500" r="3.700" fill="#b3202a" stroke="#ededed" stroke-width="1.100"/></g>
<rect x="1367.2" y="233.3" width="2.6" height="23.5" fill="#6c6c6c"/>
<g transform="translate(1382,233)"><rect x="0.900" y="17.400" width="22.200" height="5.800" rx="2.900" fill="none" stroke="#fdb515" stroke-width="1.500"/>
<circle cx="5.500" cy="20.300" r="1.100" fill="#fdb515"/><circle cx="18.600" cy="20.300" r="1.100" fill="#fdb515"/><rect x="4.300" y="10.500" width="4.500" height="4.400" fill="#ededed"/></g>
<g transform="translate(1418,233)"><rect x="0.900" y="17.400" width="22.200" height="5.800" rx="2.900" fill="none" stroke="#fdb515" stroke-width="1.500"/>
<circle cx="5.500" cy="20.300" r="1.100" fill="#fdb515"/><circle cx="18.600" cy="20.300" r="1.100" fill="#fdb515"/><rect x="10.400" y="10.500" width="4.500" height="4.400" fill="#ededed"/><path d="M10.4,3.5000000000000004 L15.2,3.5000000000000004 L14.399999999999999,0.7000000000000002 L19.4,4.9 L14.399999999999999,9.100000000000001 L15.2,6.300000000000001 L10.4,6.300000000000001Z" fill="#42b11a" stroke="none"/></g>
<g transform="translate(956,269.6)"><rect x="0.900" y="17.400" width="22.200" height="5.800" rx="2.900" fill="none" stroke="#fdb515" stroke-width="1.500"/>
<circle cx="5.500" cy="20.300" r="1.100" fill="#fdb515"/><circle cx="18.600" cy="20.300" r="1.100" fill="#fdb515"/><rect x="16.700" y="11" width="4.300" height="4.300" fill="#a80000"/></g>
<g transform="translate(992,270)"><polygon points="4.700,15.500 24,15.500 20.300,22.600 0.300,22.600" fill="#ededed"/>
<path d="M22.300,2.500 L24.300,4.600 L17.600,11 L20.600,12.300 L13.300,13.300 L14.200,6 L15.600,8.900Z" fill="#42b11a"/></g>
<rect x="1028.2" y="270.3" width="2.6" height="23.5" fill="#6c6c6c"/>
<g transform="translate(1043,270)"><rect x="0.900" y="11.600" width="12" height="11.600" fill="#444" stroke="#5bb8ec" stroke-width="1.300"/><rect x="14.400" y="0.900" width="9" height="9" fill="#444" stroke="#5bb8ec" stroke-width="1.300"/>
<path d="M4.200,20.200 L20.300,4.200 M4,15.500 L4,20.400 L9,20.400 M15.600,4 L20.500,4 L20.500,8.900" fill="none" stroke="#ededed" stroke-width="1.400"/></g>
<g transform="translate(1079,270)"><rect x="0.900" y="11.600" width="12" height="11.600" fill="none" stroke="#ededed" stroke-width="1.400"/><rect x="14.400" y="0.900" width="9" height="9" fill="none" stroke="#5bb8ec" stroke-width="1.300"/></g>
<rect x="1115.2" y="270.3" width="2.6" height="23.5" fill="#6c6c6c"/>
<g transform="translate(1130,270)"><path d="M12,0 C5,0 0,4.500 0,10.500 C0,15.500 4,18.600 8.500,17.600 C11,17.100 11.700,19 10.700,21 C10,23 11.500,24 13.500,24 C20,23.500 24.200,18 24.200,11.500 C24.200,4.500 19,0 12,0Z" fill="#ededed"/>
<g fill="#4d4d4d"><circle cx="8.700" cy="4.400" r="2.200"/><circle cx="15.500" cy="4.400" r="2.200"/><circle cx="4.400" cy="10.200" r="2.200"/><circle cx="19.600" cy="10.200" r="2.200"/></g></g>
<g transform="translate(1166,270)" fill="none" stroke="#e0e0e0" stroke-width="1.100"><rect x="0.500" y="3.500" width="23.200" height="4.200" rx="2.100"/><rect x="0.500" y="11" width="23.200" height="4.200" rx="2.100"/><rect x="0.500" y="18.300" width="23.200" height="4.200" rx="2.100"/>
<g fill="#5bb8ec" stroke="none"><circle cx="6.500" cy="5.600" r="3.500"/><circle cx="16.600" cy="13.100" r="3.500"/><circle cx="10" cy="20.500" r="3.500"/></g></g>
<g transform="translate(1202,270)"><polygon points="-0.100,5.600 9.500,0 19.500,5.600 19.500,15.500 9.500,21.400 -0.100,15.500" fill="#5bb8ec"/>
<path d="M-0.100,5.600 L9.500,10.800 L19.500,5.600 M9.500,10.800 L9.500,21.400" fill="none" stroke="#4d4d4d" stroke-width="1.200"/>
<path d="M9.600,19.900 Q17.400,12.500 25.200,19.900 Q17.400,27.300 9.600,19.900Z" fill="#ededed" stroke="#4d4d4d" stroke-width="1.200"/><circle cx="17.400" cy="19.900" r="2.700" fill="#4d4d4d"/><circle cx="17.400" cy="19.900" r="1.200" fill="#ededed"/></g>
<rect x="1238.2" y="270.3" width="2.6" height="23.5" fill="#6c6c6c"/>
</svg>
</div>
 <div id="list">
  <div class="selbg"></div>
  <div class="row" style="top:0px"><span style="left:65.2px;letter-spacing:-0.7px;transform:scaleX(.94)">PTP</span><span style="left:100.2px;letter-spacing:-1.2px;transform:scaleX(.92)">P1</span><span style="left:125.800px;letter-spacing:0.4px">&lt;Null&gt;</span><span style="left:187.600px;letter-spacing:0.4px">&lt;Null&gt;</span><span style="left:248.300px;letter-spacing:-0.3px">100%</span></div>
  <div class="row" style="top:30px"><span style="left:65.2px;letter-spacing:-0.7px;transform:scaleX(.94)">PTP</span><span style="left:100.2px;letter-spacing:-1.2px;transform:scaleX(.92)">P3</span><span style="left:125.800px;letter-spacing:0.4px">&lt;Null&gt;</span><span style="left:187.600px;letter-spacing:0.4px">&lt;Null&gt;</span><span style="left:248.300px;letter-spacing:-0.3px">100%</span></div>
  <div class="row" style="top:60px"><span style="left:65.2px;letter-spacing:-0.7px;transform:scaleX(.94)">PTP</span><span style="left:100.2px;letter-spacing:-1.2px;transform:scaleX(.92)">P4</span><span style="left:125.800px;letter-spacing:0.4px">&lt;Null&gt;</span><span style="left:187.600px;letter-spacing:0.4px">&lt;Null&gt;</span><span style="left:248.300px;letter-spacing:-0.3px">100%</span></div>
  <div class="row" style="top:90px"><span style="left:65.2px;letter-spacing:-0.7px;transform:scaleX(.94)">PTP</span><span style="left:100.2px;letter-spacing:-1.2px;transform:scaleX(.92)">P2</span><span style="left:125.800px;letter-spacing:0.4px">&lt;Null&gt;</span><span style="left:187.600px;letter-spacing:0.4px">&lt;Null&gt;</span><span style="left:248.300px;letter-spacing:-0.3px">100%</span></div>
  <div class="row" style="top:120px"><span style="left:65.2px;letter-spacing:-0.7px;transform:scaleX(.94)">PTP</span><span style="left:100.2px;letter-spacing:-1.2px;transform:scaleX(.92)">P5</span><span style="left:125.800px;letter-spacing:0.4px">&lt;Null&gt;</span><span style="left:187.600px;letter-spacing:0.4px">&lt;Null&gt;</span><span style="left:248.300px;letter-spacing:-0.3px">100%</span></div>
  <svg style="position:absolute;left:0;top:0" width="497" height="200" viewBox="948 311 497 200">
<g transform="translate(982.6,315.6) scale(0.875)" fill="none" stroke-linecap="round" stroke-linejoin="round">
<circle cx="3" cy="21.2" r="2.4" stroke="#ededed" stroke-width="1.3"/><circle cx="21" cy="4.1" r="2.4" stroke="#ededed" stroke-width="1.3"/>
<path d="M4.8,16.4 L9,12.3 L13.3,16.1 L20,9.9 M15.6,9 L20.6,9.2 L20.3,14.4" stroke="#fdb515" stroke-width="1.9"/></g>
<g transform="translate(982.6,345.6) scale(0.875)" fill="none" stroke-linecap="round" stroke-linejoin="round">
<circle cx="3" cy="21.2" r="2.4" stroke="#ededed" stroke-width="1.3"/><circle cx="21" cy="4.1" r="2.4" stroke="#ededed" stroke-width="1.3"/>
<path d="M4.8,16.4 L9,12.3 L13.3,16.1 L20,9.9 M15.6,9 L20.6,9.2 L20.3,14.4" stroke="#fdb515" stroke-width="1.9"/></g>
<g transform="translate(982.6,375.6) scale(0.875)" fill="none" stroke-linecap="round" stroke-linejoin="round">
<circle cx="3" cy="21.2" r="2.4" stroke="#ededed" stroke-width="1.3"/><circle cx="21" cy="4.1" r="2.4" stroke="#ededed" stroke-width="1.3"/>
<path d="M4.8,16.4 L9,12.3 L13.3,16.1 L20,9.9 M15.6,9 L20.6,9.2 L20.3,14.4" stroke="#fdb515" stroke-width="1.9"/></g>
<g transform="translate(982.6,405.6) scale(0.875)" fill="none" stroke-linecap="round" stroke-linejoin="round">
<circle cx="3" cy="21.2" r="2.4" stroke="#ededed" stroke-width="1.3"/><circle cx="21" cy="4.1" r="2.4" stroke="#ededed" stroke-width="1.3"/>
<path d="M4.8,16.4 L9,12.3 L13.3,16.1 L20,9.9 M15.6,9 L20.6,9.2 L20.3,14.4" stroke="#fdb515" stroke-width="1.9"/></g>
<g transform="translate(982.6,435.6) scale(0.875)" fill="none" stroke-linecap="round" stroke-linejoin="round">
<circle cx="3" cy="21.2" r="2.4" stroke="#ededed" stroke-width="1.3"/><circle cx="21" cy="4.1" r="2.4" stroke="#ededed" stroke-width="1.3"/>
<path d="M4.8,16.4 L9,12.3 L13.3,16.1 L20,9.9 M15.6,9 L20.6,9.2 L20.3,14.4" stroke="#fdb515" stroke-width="1.9"/></g>
</svg>

 </div>
</div>
</body>
</html>
